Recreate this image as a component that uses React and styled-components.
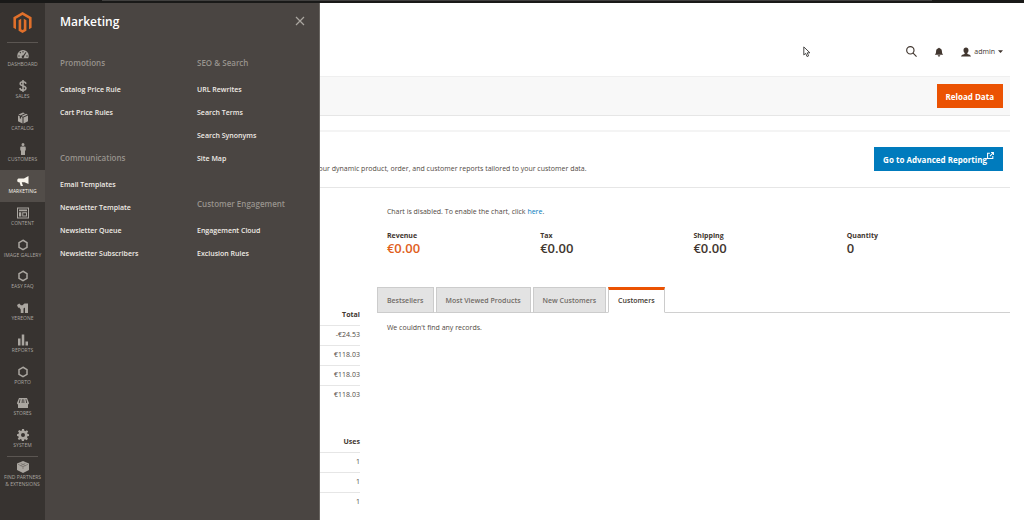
import React from "react";
import styled, { createGlobalStyle } from "styled-components";

const GlobalStyle = createGlobalStyle`
  * {
    box-sizing: border-box;
  }
  body {
    margin: 0;
    background-color: #ffffff;
    color: #514943;
    font-family: "Open Sans", "Noto Sans", sans-serif;
    font-size: 7px;
    line-height: 10px;
  }
  button {
    font-family: inherit;
    cursor: pointer;
  }
  a {
    text-decoration: none;
  }
  ul {
    list-style: none;
    margin: 0;
    padding: 0;
  }
`;

const Page = styled.div`
  min-height: 100vh;
  display: flex;
  flex-direction: column;
`;

const TopStrip = styled.div`
  height: 3px;
  padding: 0 9% 0 10%;
  background-color: #191918;
`;
const TopStripLine = styled.div`
  height: 1px;
  background-color: #41403f;
`;

const Body = styled.div`
  flex: 1;
  display: flex;
  position: relative;
`;

/* sidebar */
const Sidebar = styled.nav`
  width: 45px;
  flex-shrink: 0;
  background-color: #373330;
`;
const LogoLink = styled.a`
  height: 39px;
  display: flex;
  justify-content: center;
  align-items: center;
  color: #e0702b;
`;
const Divider = styled.hr`
  height: 1px;
  margin: 0 7px;
  border: none;
  background-color: #5b5652;
`;
const NavList = styled.ul`
  height: 413px;
  display: grid;
  grid-auto-rows: 1fr;
`;
const NavLink = styled.a`
  height: 100%;
  padding-top: 5px;
  display: flex;
  flex-direction: column;
  align-items: center;
  gap: 1px;
  font-size: 5px;
  line-height: 7px;
  text-align: center;
  text-transform: uppercase;
  white-space: nowrap;
  color: ${(props) => (props.$active ? "#f7f3eb" : "#aaa6a0")};
  background-color: ${(props) => (props.$active ? "#524d49" : "transparent")};
`;
const PartnersLink = styled(NavLink)`
  height: auto;
  padding-top: 4px;
`;

/* submenu */
const Submenu = styled.section`
  width: 275px;
  position: absolute;
  top: 0;
  bottom: 0;
  left: 45px;
  padding: 10px 14px 10px 15px;
  background-color: #4a4542;
  border-right: 1px solid #6a6662;
`;
const SubmenuHead = styled.div`
  display: flex;
  justify-content: space-between;
  align-items: flex-start;
`;
const SubmenuTitle = styled.h2`
  margin: 0;
  font-size: 12px;
  font-weight: 600;
  line-height: 17px;
  color: #ffffff;
`;
const CloseButton = styled.button`
  height: 15px;
  padding: 0;
  display: flex;
  align-items: center;
  border: none;
  background: none;
  color: #aaa6a0;
`;
const SubmenuColumns = styled.div`
  margin-top: 27px;
  display: grid;
  grid-template-columns: 137px 1fr;
`;
const SubmenuColumn = styled.div`
  display: flex;
  flex-direction: column;
  gap: 28px;
`;
const GroupTitle = styled.h3`
  margin: 0 0 9px;
  font-size: 8px;
  font-weight: 600;
  line-height: 12px;
  color: #98938d;
`;
const GroupLink = styled.a`
  display: block;
  font-size: 7px;
  font-weight: 600;
  line-height: 23px;
  color: #f0ece6;
`;

/* content */
const Main = styled.main`
  flex: 1;
  min-width: 0;
  padding: 0 14px 0 15px;
`;
const Header = styled.header`
  height: 73px;
  padding: 24px 7px 0 0;
  display: flex;
  justify-content: flex-end;
  align-items: center;
  gap: 17px;
`;
const IconButton = styled.button`
  padding: 0;
  display: flex;
  align-items: center;
  gap: 3px;
  border: none;
  background: none;
  font-size: 7px;
  color: #41362f;
`;
const ActionsBar = styled.div`
  padding: 7px;
  display: flex;
  justify-content: flex-end;
  background-color: #f8f8f8;
  border-top: 1px solid #efefef;
  border-bottom: 1px solid #e6e6e6;
`;
const Button = styled.button`
  height: 24px;
  padding: 0 9px;
  display: flex;
  align-items: center;
  border: none;
  font-size: 8px;
  font-weight: 700;
  white-space: nowrap;
  color: #ffffff;
  background-color: ${(props) => (props.$primary ? "#eb5202" : "#007bbd")};
`;
const ButtonIcon = styled.span`
  height: 14px;
  display: flex;
`;
const Reporting = styled.section`
  margin-top: 14px;
  padding: 15px 7px 13px 12px;
  display: flex;
  justify-content: space-between;
  align-items: flex-start;
  border-top: 2px solid #f4f4f4;
  border-bottom: 1px solid #e6e6e6;
`;
const ReportingText = styled.p`
  margin: 17px 0 0;
  white-space: nowrap;
`;
const Dashboard = styled.div`
  display: grid;
  grid-template-columns: 9fr 19fr;
  gap: 17px;
`;
const Tables = styled.div`
  padding-top: 117px;
  display: flex;
  flex-direction: column;
  gap: 27px;
`;
const Table = styled.table`
  width: 100%;
  border-collapse: collapse;
  text-align: right;

  th,
  td {
    height: 20px;
    padding: 0;
  }
  th {
    color: #41362f;
  }
  tbody td {
    border-top: 1px solid #e6e6e6;
  }
`;
const ChartNote = styled.p`
  margin: 0;
  padding: 19px 10px 0;

  a {
    color: #007bbd;
  }
`;
const Totals = styled.dl`
  margin: 14px 0 0;
  padding: 0 10px;
  display: grid;
  grid-template-columns: repeat(4, 1fr);
`;
const TotalLabel = styled.dt`
  font-weight: 700;
  color: #41362f;
`;
const TotalValue = styled.dd`
  margin: 0;
  font-size: 13px;
  font-weight: 600;
  line-height: 14px;
  color: ${(props) => (props.$highlight ? "#e0601c" : "#41362f")};
`;
const Tabs = styled.div`
  height: 26px;
  margin-top: 32px;
  display: flex;
  gap: 2px;
  border-bottom: 1px solid #d0d0d0;
`;
const Tab = styled.button`
  height: 26px;
  padding: ${(props) => (props.$active ? "0 9px 2px" : "0 9px")};
  border: 1px solid #cccccc;
  border-top: ${(props) => (props.$active ? "3px solid #eb5202" : "1px solid #cccccc")};
  border-bottom-color: ${(props) => (props.$active ? "#ffffff" : "#cccccc")};
  font-size: 7px;
  font-weight: 600;
  white-space: nowrap;
  color: ${(props) => (props.$active ? "#41362f" : "#716b66")};
  background-color: ${(props) => (props.$active ? "#ffffff" : "#e3e3e3")};
`;
const Empty = styled.p`
  margin: 0;
  padding: 10px;
`;
const Pointer = styled.svg`
  position: absolute;
  top: 43px;
  left: 803px;
`;

const Icon = ({ children, size = 12, box = 24 }) => (
  <svg
    width={size}
    height={size}
    viewBox={`0 0 ${box} ${box}`}
    fill="currentColor"
    aria-hidden="true"
  >
    {children}
  </svg>
);

const icons = {
  dashboard: (
    <path
      fillRule="evenodd"
      d="M12 4A11.5 11.5 0 0 0 .5 15.5c0 2 .5 3.700 1.200 5h20.600c.7-1.300 1.200-3 1.200-5A11.500 11.500 0 0 0 12 4zM11 6h2v3h-2zM5 9l1.400-1.400 2 2L7 11zM2.500 15h3v2h-3zM18.500 15h3v2h-3zM17.500 8l1.300 1-4.600 7.500a2.500 2.500 0 1 1-2-1.500z"
    />
  ),
  sales: (
    <path
      d="M18 7.500C17.400 4.800 15.300 3.500 12 3.500c-3.500 0-5.600 1.600-5.600 4.100 0 5.500 11.500 2.900 11.500 8.400 0 2.700-2.300 4.500-5.900 4.500-3.700 0-5.800-1.600-6.300-4.500M12 0v24"
      fill="none"
      stroke="currentColor"
      strokeWidth="3"
    />
  ),
  catalog: (
    <>
      <path d="M12 1l4 1.600-9.300 4.200L3 5.200zM18 3.400l3.500 1.800L12 9.400 8.700 7.800z" />
      <path d="M2 7l3.500 1.500v4l2.500 1v-4l3 1.300V23l-9-4.500zM22 7v11.500L13 23V10.800z" />
    </>
  ),
  customers: (
    <path d="M12 0a3 3 0 1 1 0 6 3 3 0 0 1 0-6zM9 7h6c1.600 0 2.500 1 2.500 2.500V15H16v9H8v-9H6.500V9.500C6.500 8 7.400 7 9 7z" />
  ),
  marketing: (
    <path d="M23 2v16l-8-3.500H9.500L12 22H7.500L5 14.500H3C1.500 14.500.5 13 .5 11S1.500 7 3 7h11z" />
  ),
  content: (
    <path
      fillRule="evenodd"
      d="M0 1h24v22H0zM2 3v18h20V3zM4 5h16v3.500H4zM4 10.500h4.500V19H4zM10.500 10.500H20V19h-9.500zM12.500 12.500V17H18v-4.500z"
    />
  ),
  hexagon: (
    <path
      d="M12 2.500l8 4.800v9.400l-8 4.800-8-4.800V7.300z"
      fill="none"
      stroke="currentColor"
      strokeWidth="3"
    />
  ),
  yereone: (
    <path d="M0 6l4.500-3 3.500 3.500h3L15 3h7v19h-6V11l-3 2v9H7.500v-7L4 10.500 2.500 12z" />
  ),
  reports: <path d="M2 9h5v14H2zM9.500 1h5v22h-5zM17 15h5v8h-5z" />,
  stores: (
    <path
      fillRule="evenodd"
      d="M4 2h16l4 10c0 1.500-1 2.500-2 2.800V22H2v-7.200C1 14.500 0 13.500 0 12zM5.500 4.500L3.500 12h1.800l1.700-7.500zM10 4.500L9.300 12H11l.3-7.500zM13 4.500v7.500h1.700L14.200 4.500zM17 4.500l1.500 7.500h1.800L18.500 4.500z"
    />
  ),
  system: (
    <path
      fillRule="evenodd"
      d="M10 0h4l.7 3.500 2 .8 3-2 2.600 2.600-2 3 .8 2L24 10.500v3.500l-3.300.7-.8 2 2 3-2.600 2.600-3-2-2 .8L13.800 24h-4l-.7-3.200-2-.8-3 2-2.600-2.600 2-3-.8-2L0 13.800v-3.500l3.200-.7.8-2-2-3L4.700 2l3 2 2-.8zM12 8a4 4 0 1 0 0 8 4 4 0 0 0 0-8z"
    />
  ),
  partners: (
    <>
      <path d="M12 0l12 5v13l-12 6L0 18V5z" />
      <path
        d="M2 6.500l10 5 10-5M12 11.500V16M7 4.500l10 5M17 4.500l-10 5"
        fill="none"
        stroke="#6b6661"
        strokeWidth="1.200"
      />
    </>
  ),
};

const navItems = [
  { label: "Dashboard", icon: "dashboard" },
  { label: "Sales", icon: "sales" },
  { label: "Catalog", icon: "catalog" },
  { label: "Customers", icon: "customers" },
  { label: "Marketing", icon: "marketing", active: true },
  { label: "Content", icon: "content" },
  { label: "Image Gallery", icon: "hexagon" },
  { label: "Easy FAQ", icon: "hexagon" },
  { label: "Yereone", icon: "yereone" },
  { label: "Reports", icon: "reports" },
  { label: "Porto", icon: "hexagon" },
  { label: "Stores", icon: "stores" },
  { label: "System", icon: "system" },
];

const submenu = [
  [
    { title: "Promotions", links: ["Catalog Price Rule", "Cart Price Rules"] },
    {
      title: "Communications",
      links: [
        "Email Templates",
        "Newsletter Template",
        "Newsletter Queue",
        "Newsletter Subscribers",
      ],
    },
  ],
  [
    {
      title: "SEO & Search",
      links: ["URL Rewrites", "Search Terms", "Search Synonyms", "Site Map"],
    },
    {
      title: "Customer Engagement",
      links: ["Engagement Cloud", "Exclusion Rules"],
    },
  ],
];

const totals = [
  { label: "Revenue", value: "€0.00", highlight: true },
  { label: "Tax", value: "€0.00" },
  { label: "Shipping", value: "€0.00" },
  { label: "Quantity", value: "0" },
];

const tables = [
  { heading: "Total", rows: ["-€24.53", "€118.03", "€118.03", "€118.03"] },
  { heading: "Uses", rows: ["1", "1", "1"] },
];

const tabs = ["Bestsellers", "Most Viewed Products", "New Customers", "Customers"];

const App = () => {
  return (
    <Page>
      <GlobalStyle />
      <TopStrip>
        <TopStripLine />
      </TopStrip>
      <Body>
        <Sidebar>
          <LogoLink href="#" aria-label="Magento">
            <Icon size={21} box={512}>
              <path
                transform="translate(32 0)"
                d="M445.700 127.900V384l-63.400 36.500V164.700L223.800 73.100 65.200 164.700l.4 255.900L2.300 384V128.100L224.200 0l221.500 127.900zM255.600 420.500L224 438.900l-31.800-18.200v-256l-63.300 36.600.1 255.900 94.900 54.900 95.100-54.900v-256l-63.400-36.600v255.900z"
              />
            </Icon>
          </LogoLink>
          <Divider />
          <NavList>
            {navItems.map((item) => (
              <li key={item.label}>
                <NavLink href="#" $active={item.active}>
                  <Icon>{icons[item.icon]}</Icon>
                  {item.label}
                </NavLink>
              </li>
            ))}
          </NavList>
          <Divider />
          <PartnersLink href="#">
            <Icon>{icons.partners}</Icon>
            <span>
              Find Partners
              <br />& Extensions
            </span>
          </PartnersLink>
        </Sidebar>

        <Main>
          <Header>
            <IconButton aria-label="Search">
              <Icon size={11}>
                <path
                  d="M15.500 15.500L23 23M17.500 9.500a8 8 0 1 1-16 0 8 8 0 0 1 16 0z"
                  fill="none"
                  stroke="currentColor"
                  strokeWidth="2.500"
                />
              </Icon>
            </IconButton>
            <IconButton aria-label="Notifications">
              <Icon size={10}>
                <path d="M12 1.500c1 0 1.700.7 1.700 1.500 3.300.8 5.300 3.500 5.300 7 0 4 .8 6 3 8.500H2c2.200-2.500 3-4.500 3-8.500 0-3.500 2-6.200 5.300-7 0-.8.7-1.500 1.700-1.500zM9 20h6c0 1.700-1.300 3-3 3s-3-1.300-3-3z" />
              </Icon>
            </IconButton>
            <IconButton>
              <Icon size={10}>
                <path d="M12 1c3.600 0 6 2.500 6 6.500 0 2.900-1.100 5.400-3 6.700v1.600c0 .7.500 1 1.600 1.300 3.900 1 6.900 1.700 7.400 5.900H0c.5-4.200 3.500-4.900 7.400-5.900 1.100-.3 1.600-.6 1.600-1.300v-1.600C7.100 12.900 6 10.400 6 7.500 6 3.500 8.400 1 12 1z" />
              </Icon>
              admin
              <Icon size={5} box={10}>
                <path d="M0 2.500h10l-5 5.500z" />
              </Icon>
            </IconButton>
          </Header>
          <ActionsBar>
            <Button $primary>Reload Data</Button>
          </ActionsBar>
          <Reporting>
            <ReportingText>
              Gain new insights and take command of your business&apos; performance, using
              our dynamic product, order, and customer reports tailored to your customer
              data.
            </ReportingText>
            <Button>
              Go to Advanced Reporting
              <ButtonIcon>
                <Icon size={7} box={12}>
                  <path
                    d="M5 2H1v9h9V7M7 1h4v4M11 1L5 7"
                    fill="none"
                    stroke="currentColor"
                    strokeWidth="1.800"
                  />
                </Icon>
              </ButtonIcon>
            </Button>
          </Reporting>

          <Dashboard>
            <Tables>
              {tables.map((table) => (
                <Table key={table.heading}>
                  <thead>
                    <tr>
                      <th scope="col">{table.heading}</th>
                    </tr>
                  </thead>
                  <tbody>
                    {table.rows.map((row, i) => (
                      <tr key={i}>
                        <td>{row}</td>
                      </tr>
                    ))}
                  </tbody>
                </Table>
              ))}
            </Tables>
            <div>
              <ChartNote>
                Chart is disabled. To enable the chart, click <a href="#">here</a>.
              </ChartNote>
              <Totals>
                {totals.map((total) => (
                  <div key={total.label}>
                    <TotalLabel>{total.label}</TotalLabel>
                    <TotalValue $highlight={total.highlight}>{total.value}</TotalValue>
                  </div>
                ))}
              </Totals>
              <Tabs role="tablist">
                {tabs.map((tab) => (
                  <Tab
                    key={tab}
                    role="tab"
                    aria-selected={tab === "Customers"}
                    $active={tab === "Customers"}
                  >
                    {tab}
                  </Tab>
                ))}
              </Tabs>
              <Empty>We couldn&apos;t find any records.</Empty>
            </div>
          </Dashboard>
        </Main>

        <Submenu>
          <SubmenuHead>
            <SubmenuTitle>Marketing</SubmenuTitle>
            <CloseButton aria-label="Close">
              <Icon size={10} box={10}>
                <path
                  d="M1 1l8 8M9 1L1 9"
                  fill="none"
                  stroke="currentColor"
                  strokeWidth="1.200"
                />
              </Icon>
            </CloseButton>
          </SubmenuHead>
          <SubmenuColumns>
            {submenu.map((column, i) => (
              <SubmenuColumn key={i}>
                {column.map((group) => (
                  <div key={group.title}>
                    <GroupTitle>{group.title}</GroupTitle>
                    {group.links.map((link) => (
                      <GroupLink key={link} href="#">
                        {link}
                      </GroupLink>
                    ))}
                  </div>
                ))}
              </SubmenuColumn>
            ))}
          </SubmenuColumns>
        </Submenu>

        <Pointer width="8" height="12" viewBox="0 0 15 22" aria-hidden="true">
          <path
            d="M1.500 1.500v15l3.500-3 2.500 6 3-1.200-2.500-5.800h5z"
            fill="#ffffff"
            stroke="#41403f"
            strokeWidth="1.800"
          />
        </Pointer>
      </Body>
    </Page>
  );
};

export default App;
